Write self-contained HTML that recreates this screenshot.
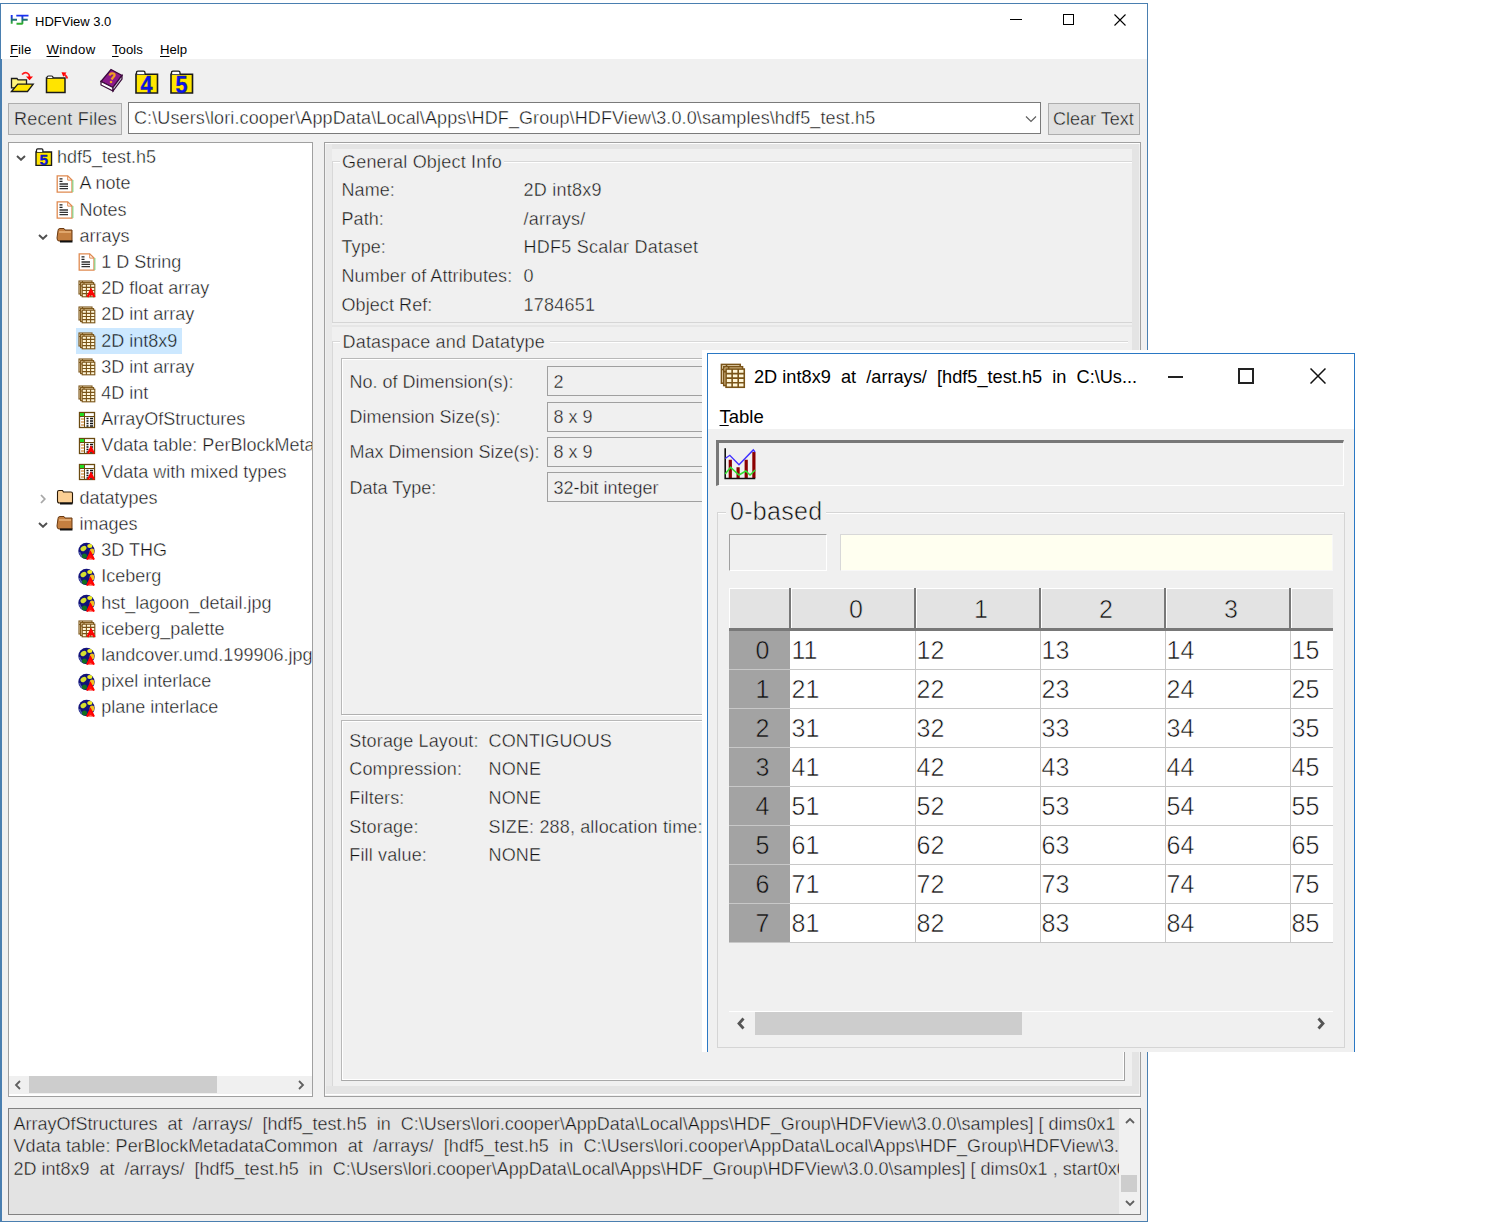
<!DOCTYPE html>
<html><head><meta charset="utf-8">
<style>
html,body{margin:0;padding:0;}
body{width:1500px;height:1225px;position:relative;overflow:hidden;background:#fff;font-family:"Liberation Sans",sans-serif;color:#000;}
.a{position:absolute;box-sizing:border-box;}
.t{position:absolute;white-space:nowrap;line-height:1;color:#111;-webkit-text-stroke:0.4px #f0f0f0;}
.tw{-webkit-text-stroke-color:#fff;}
.tg{-webkit-text-stroke-color:#e3e3e3;}
.tb{-webkit-text-stroke-color:#e1e1e1;}
.td{-webkit-text-stroke-color:#a3a3a3;}
.big{-webkit-text-stroke-width:0.55px;}
.s{position:absolute;white-space:nowrap;line-height:1;color:#000;}
u{text-decoration:underline;text-underline-offset:1.5px;text-decoration-thickness:1px;}
</style></head>
<body>

<div class="a" style="left:0px;top:3px;width:1148px;height:1219px;border:1px solid #4a7fb0;border-left-width:2px;background:#f0f0f0;"></div>
<div class="a" style="left:1px;top:4px;width:1146px;height:55px;background:#fff;"></div>
<svg class="a" style="left:10px;top:13px" width="20" height="13" viewBox="0 0 20 13"><defs><linearGradient id="lg" x1="0" y1="0" x2="0" y2="1"><stop offset="0.15" stop-color="#1a30f0"/><stop offset="0.55" stop-color="#1f7070"/><stop offset="0.95" stop-color="#30b030"/></linearGradient></defs><path d="M1.7 2v8.8M1.7 6.8H7M6.3 2.6H18.5M12.4 2.6V10.3Q12 10.8 11 10.8H6.5M12.4 6.8H17.7" stroke="url(#lg)" stroke-width="1.9" fill="none"/></svg>
<div class="s" style="left:35px;top:14.8px;font-size:13px;">HDFView 3.0</div>
<div class="a" style="left:1010px;top:19px;width:12px;height:1px;background:#000;"></div>
<div class="a" style="left:1063px;top:14px;width:11px;height:11px;border:1px solid #000;"></div>
<svg class="a" style="left:1114px;top:14px" width="12" height="12" viewBox="0 0 12 12"><path d="M0.5 0.5L11.5 11.5M11.5 0.5L0.5 11.5" stroke="#000" stroke-width="1.1"/></svg>
<div class="s" style="left:10px;top:42.6px;font-size:13.2px;"><u>F</u>ile</div>
<div class="s" style="left:46.5px;top:42.6px;font-size:13.2px;letter-spacing:0.35px;"><u>W</u>indow</div>
<div class="s" style="left:112px;top:42.6px;font-size:13.2px;"><u>T</u>ools</div>
<div class="s" style="left:160px;top:42.6px;font-size:13.2px;"><u>H</u>elp</div>
<svg class="a" style="left:10px;top:69px" width="25" height="25" viewBox="0 0 25 25"><path d="M1.5 9.5h5.5l1 1.3h8.5v8h-15z" fill="#fff37a" stroke="#1a1a1a" stroke-width="1.3"/><path d="M1.5 22.5L7.8 15.2H23.2L17.5 22.5z" fill="#ffe400" stroke="#1a1a1a" stroke-width="1.3"/><path d="M12 5.5q3.5-3.5 6.5 -0.5q1 1 1 3" fill="none" stroke="#ff1a1a" stroke-width="1.7"/><path d="M16 7.5h7l-3.5 3.8z" fill="#ff0000"/></svg>
<svg class="a" style="left:45px;top:70px" width="25" height="24" viewBox="0 0 25 24"><path d="M1.5 8h18.5v14.5h-18.5z" fill="#ffe400" stroke="#1a1a1a" stroke-width="1.5"/><path d="M2 8v-0.5q0-1.5 1.5-1.5h3q1.5 0 1.5 1.5v0.5" fill="#fff" stroke="#1a1a1a" stroke-width="1.2"/><path d="M16.5 2.2l5 0.3l-3.2 4.3z" fill="#ff0000"/><path d="M19.5 4.5q2.5 2 2.8 4" fill="none" stroke="#ff1a1a" stroke-width="1.8"/></svg>
<svg class="a" style="left:99px;top:68px" width="25" height="25" viewBox="0 0 25 25"><path d="M2 13.5L12 1.5L23 7.5L14 19.5z" fill="#8a1a8a" stroke="#3a0a3a" stroke-width="1.3"/><path d="M2 13.5L14 19.5L14 23L2 17z" fill="#fff" stroke="#3a0a3a" stroke-width="1.2"/><path d="M14 19.5L23 7.5L23 11L14 23z" fill="#c8c8d0" stroke="#3a0a3a" stroke-width="1.2"/><path d="M10.5 7.5q1-3 4-2q2.5 1-0.5 4l-1.5 2" fill="none" stroke="#f0a020" stroke-width="2.2"/><circle cx="12" cy="14" r="1.3" fill="#f0a020"/></svg>
<svg class="a" style="left:134.5px;top:69.5px" width="24" height="24" viewBox="0 0 24 24"><path d="M1 4.2h21.5v18.8h-21.5z" fill="#ffe600" stroke="#1a1a1a" stroke-width="1.6"/><path d="M1.5 4.2v-1.5q0-1.5 1.5-1.5h5.5q1.5 0 1.5 1.5v1.5" fill="#fff" stroke="#1a1a1a" stroke-width="1.3"/><text x="0" y="0" transform="translate(11.5 23) scale(0.9 1)" font-family="Liberation Sans" font-weight="bold" font-size="24" text-anchor="middle" fill="#0a14f0" stroke="#202060" stroke-width="0.4">4</text></svg>
<svg class="a" style="left:169.5px;top:69.5px" width="24" height="24" viewBox="0 0 24 24"><path d="M1 4.2h21.5v18.8h-21.5z" fill="#ffe600" stroke="#1a1a1a" stroke-width="1.6"/><path d="M1.5 4.2v-1.5q0-1.5 1.5-1.5h5.5q1.5 0 1.5 1.5v1.5" fill="#fff" stroke="#1a1a1a" stroke-width="1.3"/><text x="0" y="0" transform="translate(11.5 23) scale(0.9 1)" font-family="Liberation Sans" font-weight="bold" font-size="24" text-anchor="middle" fill="#0a14f0" stroke="#202060" stroke-width="0.4">5</text></svg>
<div class="a" style="left:8px;top:103px;width:114px;height:32px;border:1px solid #adadad;background:#e1e1e1;"></div>
<div class="t tb" style="left:14px;top:110.4px;font-size:18px;letter-spacing:0.25px;">Recent Files</div>
<div class="a" style="left:128px;top:102px;width:913px;height:32px;border:1px solid #7a7a7a;background:#fff;"></div>
<div class="t tw" style="left:134px;top:108.8px;font-size:18px;letter-spacing:0.11px;">C:\Users\lori.cooper\AppData\Local\Apps\HDF_Group\HDFView\3.0.0\samples\hdf5_test.h5</div>
<svg class="a" style="left:1025px;top:115px" width="12" height="8" viewBox="0 0 12 8"><path d="M1 1.5L6 6.5L11 1.5" stroke="#606060" stroke-width="1.2" fill="none"/></svg>
<div class="a" style="left:1048px;top:103px;width:92px;height:32px;border:1px solid #adadad;background:#e1e1e1;"></div>
<div class="t tb" style="left:1053px;top:110.2px;font-size:18px;">Clear Text</div>
<div class="a" style="left:8px;top:142px;width:305px;height:955px;border:1px solid #a0a0a0;background:#fff;"></div>
<div class="a" style="left:9px;top:143px;width:303px;height:953px;overflow:hidden;">
<svg class="a" style="left:25.5px;top:4.5px" width="18" height="18" viewBox="0 0 18 18"><path d="M1 4h15.5v13.5h-15.5z" fill="#ffe600" stroke="#1a1a1a" stroke-width="1.4"/><path d="M1.5 4v-2q0-1.2 1.2-1.2h4q1.2 0 1.2 1.2v2" fill="#fff" stroke="#1a1a1a" stroke-width="1.2"/><text x="8.8" y="17" font-family="Liberation Sans" font-weight="bold" font-size="15.5" text-anchor="middle" fill="#0a14f0" stroke="#202060" stroke-width="0.3">5</text></svg>
<svg class="a" style="left:7px;top:12px" width="10" height="6" viewBox="0 0 10 6"><path d="M1 1l4 3.8l4-3.8" stroke="#505050" stroke-width="1.9" fill="none"/></svg>
<div class="t tw" style="left:48px;top:5.2px;font-size:18px;">hdf5_test.h5</div>
<svg class="a" style="left:47px;top:31.5px" width="18" height="18" viewBox="0 0 18 18"><path d="M1.2 0.8h10.5l4.3 4.3v12h-14.8z" fill="#fff" stroke="#e08a50" stroke-width="1.3"/><path d="M16.8 5v12" stroke="#8fd48f" stroke-width="1.3"/><path d="M11.7 0.8v4.3h4.3" fill="none" stroke="#e08a50" stroke-width="1"/><path d="M3.5 3.8h3M3.5 6.3h3" stroke="#222" stroke-width="1.2"/><path d="M3.5 9h8.5M3.5 11.3h8.5M3.5 13.7h8.5" stroke="#333" stroke-width="1.3"/></svg>
<div class="t tw" style="left:70.5px;top:31.4px;font-size:18px;">A note</div>
<svg class="a" style="left:47px;top:57.5px" width="18" height="18" viewBox="0 0 18 18"><path d="M1.2 0.8h10.5l4.3 4.3v12h-14.8z" fill="#fff" stroke="#e08a50" stroke-width="1.3"/><path d="M16.8 5v12" stroke="#8fd48f" stroke-width="1.3"/><path d="M11.7 0.8v4.3h4.3" fill="none" stroke="#e08a50" stroke-width="1"/><path d="M3.5 3.8h3M3.5 6.3h3" stroke="#222" stroke-width="1.2"/><path d="M3.5 9h8.5M3.5 11.3h8.5M3.5 13.7h8.5" stroke="#333" stroke-width="1.3"/></svg>
<div class="t tw" style="left:70.5px;top:57.6px;font-size:18px;">Notes</div>
<svg class="a" style="left:47px;top:84px" width="18" height="16" viewBox="0 0 18 16"><path d="M2 3.5q0-2 2-2h4l1 1.5h7v11h-13q-2 0-2-3z" fill="#c47f40" stroke="#6a3a12" stroke-width="1"/><path d="M4 14.5h12.5" stroke="#111" stroke-width="2"/><path d="M3 5h12" stroke="#f2c08a" stroke-width="1.2"/></svg>
<svg class="a" style="left:29px;top:91px" width="10" height="6" viewBox="0 0 10 6"><path d="M1 1l4 3.8l4-3.8" stroke="#505050" stroke-width="1.9" fill="none"/></svg>
<div class="t tw" style="left:70.5px;top:83.8px;font-size:18px;">arrays</div>
<svg class="a" style="left:69px;top:109.5px" width="18" height="18" viewBox="0 0 18 18"><path d="M1.2 0.8h10.5l4.3 4.3v12h-14.8z" fill="#fff" stroke="#e08a50" stroke-width="1.3"/><path d="M16.8 5v12" stroke="#8fd48f" stroke-width="1.3"/><path d="M11.7 0.8v4.3h4.3" fill="none" stroke="#e08a50" stroke-width="1"/><path d="M3.5 3.8h3M3.5 6.3h3" stroke="#222" stroke-width="1.2"/><path d="M3.5 9h8.5M3.5 11.3h8.5M3.5 13.7h8.5" stroke="#333" stroke-width="1.3"/></svg>
<div class="t tw" style="left:92.3px;top:110.0px;font-size:18px;">1 D String</div>
<svg class="a" style="left:69px;top:136.5px" width="18" height="18" viewBox="0 0 18 18"><g stroke="#7a5418" stroke-width="1.1"><rect x="1" y="1" width="13" height="13" fill="#f8e8c8"/><path d="M1 4.5h13M4.5 1v13" fill="none"/><rect x="2.6" y="2.6" width="13" height="13" fill="#f4dcb0"/><path d="M2.6 6h13M6 2.6v13" fill="none"/><rect x="4.2" y="4.2" width="12.6" height="12.6" fill="#fff6d8"/><path d="M8.4 4.2v12.6M12.6 4.2v12.6M4.2 7.35h12.6M4.2 10.5h12.6M4.2 13.65h12.6" fill="none"/></g><path d="M9.5 17l3.5-7l3.5 7M10.8 14.5h4.4" fill="none" stroke="#ff0000" stroke-width="2.2"/></svg>
<div class="t tw" style="left:92.3px;top:136.2px;font-size:18px;">2D float array</div>
<svg class="a" style="left:69px;top:162.5px" width="18" height="18" viewBox="0 0 18 18"><g stroke="#7a5418" stroke-width="1.1"><rect x="1" y="1" width="13" height="13" fill="#f8e8c8"/><path d="M1 4.5h13M4.5 1v13" fill="none"/><rect x="2.6" y="2.6" width="13" height="13" fill="#f4dcb0"/><path d="M2.6 6h13M6 2.6v13" fill="none"/><rect x="4.2" y="4.2" width="12.6" height="12.6" fill="#fff6d8"/><path d="M8.4 4.2v12.6M12.6 4.2v12.6M4.2 7.35h12.6M4.2 10.5h12.6M4.2 13.65h12.6" fill="none"/></g></svg>
<div class="t tw" style="left:92.3px;top:162.4px;font-size:18px;">2D int array</div>
<div class="a" style="left:67px;top:185px;width:106px;height:26px;background:#cce8ff;"></div>
<svg class="a" style="left:69px;top:188.5px" width="18" height="18" viewBox="0 0 18 18"><g stroke="#7a5418" stroke-width="1.1"><rect x="1" y="1" width="13" height="13" fill="#f8e8c8"/><path d="M1 4.5h13M4.5 1v13" fill="none"/><rect x="2.6" y="2.6" width="13" height="13" fill="#f4dcb0"/><path d="M2.6 6h13M6 2.6v13" fill="none"/><rect x="4.2" y="4.2" width="12.6" height="12.6" fill="#fff6d8"/><path d="M8.4 4.2v12.6M12.6 4.2v12.6M4.2 7.35h12.6M4.2 10.5h12.6M4.2 13.65h12.6" fill="none"/></g></svg>
<div class="t" style="left:92.3px;top:188.6px;font-size:18px;-webkit-text-stroke-color:#cce8ff;">2D int8x9</div>
<svg class="a" style="left:69px;top:214.5px" width="18" height="18" viewBox="0 0 18 18"><g stroke="#7a5418" stroke-width="1.1"><rect x="1" y="1" width="13" height="13" fill="#f8e8c8"/><path d="M1 4.5h13M4.5 1v13" fill="none"/><rect x="2.6" y="2.6" width="13" height="13" fill="#f4dcb0"/><path d="M2.6 6h13M6 2.6v13" fill="none"/><rect x="4.2" y="4.2" width="12.6" height="12.6" fill="#fff6d8"/><path d="M8.4 4.2v12.6M12.6 4.2v12.6M4.2 7.35h12.6M4.2 10.5h12.6M4.2 13.65h12.6" fill="none"/></g></svg>
<div class="t tw" style="left:92.3px;top:214.8px;font-size:18px;">3D int array</div>
<svg class="a" style="left:69px;top:241.5px" width="18" height="18" viewBox="0 0 18 18"><g stroke="#7a5418" stroke-width="1.1"><rect x="1" y="1" width="13" height="13" fill="#f8e8c8"/><path d="M1 4.5h13M4.5 1v13" fill="none"/><rect x="2.6" y="2.6" width="13" height="13" fill="#f4dcb0"/><path d="M2.6 6h13M6 2.6v13" fill="none"/><rect x="4.2" y="4.2" width="12.6" height="12.6" fill="#fff6d8"/><path d="M8.4 4.2v12.6M12.6 4.2v12.6M4.2 7.35h12.6M4.2 10.5h12.6M4.2 13.65h12.6" fill="none"/></g></svg>
<div class="t tw" style="left:92.3px;top:241.0px;font-size:18px;">4D int</div>
<svg class="a" style="left:69px;top:267.5px" width="18" height="18" viewBox="0 0 18 18"><rect x="1.5" y="1.5" width="15" height="15" fill="#fff" stroke="#6a4a10" stroke-width="1.3"/><rect x="2" y="2" width="4.5" height="3.5" fill="#22dd22"/><path d="M6.5 2v14.5M1.5 5.5h15" stroke="#6a4a10" stroke-width="1"/><path d="M3 8h3M3 11h3M3 14h3" stroke="#d9a060" stroke-width="1.5"/><path d="M8.5 7.5h2M12 7.5h3M8.5 10h2M12 10h3M8.5 12.5h2M12 12.5h3M8.5 15h2M12 15h3" stroke="#111" stroke-width="1.4"/></svg>
<div class="t tw" style="left:92.3px;top:267.2px;font-size:18px;">ArrayOfStructures</div>
<svg class="a" style="left:69px;top:293.5px" width="18" height="18" viewBox="0 0 18 18"><rect x="1.5" y="1.5" width="15" height="15" fill="#fff" stroke="#6a4a10" stroke-width="1.3"/><rect x="2" y="2" width="4.5" height="3.5" fill="#22dd22"/><path d="M6.5 2v14.5M1.5 5.5h15" stroke="#6a4a10" stroke-width="1"/><path d="M3 8h3M3 11h3M3 14h3" stroke="#d9a060" stroke-width="1.5"/><path d="M8.5 7.5h2M12 7.5h3M8.5 10h2M12 10h3M8.5 12.5h2M12 12.5h3M8.5 15h2M12 15h3" stroke="#111" stroke-width="1.4"/><path d="M10 16.5l3-6 3 6M11.2 14h3.6" fill="none" stroke="#ff0000" stroke-width="2"/></svg>
<div class="t tw" style="left:92.3px;top:293.4px;font-size:18px;">Vdata table: PerBlockMetadataCommon</div>
<svg class="a" style="left:69px;top:319.5px" width="18" height="18" viewBox="0 0 18 18"><rect x="1.5" y="1.5" width="15" height="15" fill="#fff" stroke="#6a4a10" stroke-width="1.3"/><rect x="2" y="2" width="4.5" height="3.5" fill="#22dd22"/><path d="M6.5 2v14.5M1.5 5.5h15" stroke="#6a4a10" stroke-width="1"/><path d="M3 8h3M3 11h3M3 14h3" stroke="#d9a060" stroke-width="1.5"/><path d="M8.5 7.5h2M12 7.5h3M8.5 10h2M12 10h3M8.5 12.5h2M12 12.5h3M8.5 15h2M12 15h3" stroke="#111" stroke-width="1.4"/><path d="M10 16.5l3-6 3 6M11.2 14h3.6" fill="none" stroke="#ff0000" stroke-width="2"/></svg>
<div class="t tw" style="left:92.3px;top:319.6px;font-size:18px;">Vdata with mixed types</div>
<svg class="a" style="left:47px;top:346px" width="18" height="16" viewBox="0 0 18 16"><path d="M1.5 3q0-1.5 1.5-1.5h3.5l1 1.5h7.5q1.5 0 1.5 1.5v9.5h-13q-2 0-2-2z" fill="#fbcf94" stroke="#2a1a08" stroke-width="1.1"/><path d="M4 14.5h12.5" stroke="#111" stroke-width="2"/></svg>
<svg class="a" style="left:31px;top:351px" width="6" height="10" viewBox="0 0 6 10"><path d="M1 1l3.8 4l-3.8 4" stroke="#a8a8a8" stroke-width="1.8" fill="none"/></svg>
<div class="t tw" style="left:70.5px;top:345.8px;font-size:18px;">datatypes</div>
<svg class="a" style="left:47px;top:372px" width="18" height="16" viewBox="0 0 18 16"><path d="M2 3.5q0-2 2-2h4l1 1.5h7v11h-13q-2 0-2-3z" fill="#c47f40" stroke="#6a3a12" stroke-width="1"/><path d="M4 14.5h12.5" stroke="#111" stroke-width="2"/><path d="M3 5h12" stroke="#f2c08a" stroke-width="1.2"/></svg>
<svg class="a" style="left:29px;top:379px" width="10" height="6" viewBox="0 0 10 6"><path d="M1 1l4 3.8l4-3.8" stroke="#505050" stroke-width="1.9" fill="none"/></svg>
<div class="t tw" style="left:70.5px;top:372.0px;font-size:18px;">images</div>
<svg class="a" style="left:69px;top:398.5px" width="18" height="19" viewBox="0 0 18 19"><circle cx="8.5" cy="9" r="8.2" fill="#12127a"/><ellipse cx="5.5" cy="6.5" rx="3.2" ry="2.3" transform="rotate(-35 5.5 6.5)" fill="#d6e030"/><ellipse cx="11.8" cy="4" rx="2.6" ry="2" fill="#f0f020"/><path d="M1.5 10q0.5 3 3 5" stroke="#5060b0" stroke-width="1.5" fill="none"/><ellipse cx="6.5" cy="14" rx="2.5" ry="2.5" fill="#107020"/><ellipse cx="14" cy="9.5" rx="2.3" ry="3" fill="#f0c020"/><path d="M8.5 17.5l4-8l4 8z" fill="#ff1010"/><path d="M9 17.5l3.5-7.2l3.5 7.2" fill="none" stroke="#ff0000" stroke-width="1.8"/><path d="M11.5 16.5h2" stroke="#ff6040" stroke-width="1"/></svg>
<div class="t tw" style="left:92.3px;top:398.2px;font-size:18px;">3D THG</div>
<svg class="a" style="left:69px;top:424.5px" width="18" height="19" viewBox="0 0 18 19"><circle cx="8.5" cy="9" r="8.2" fill="#12127a"/><ellipse cx="5.5" cy="6.5" rx="3.2" ry="2.3" transform="rotate(-35 5.5 6.5)" fill="#d6e030"/><ellipse cx="11.8" cy="4" rx="2.6" ry="2" fill="#f0f020"/><path d="M1.5 10q0.5 3 3 5" stroke="#5060b0" stroke-width="1.5" fill="none"/><ellipse cx="6.5" cy="14" rx="2.5" ry="2.5" fill="#107020"/><ellipse cx="14" cy="9.5" rx="2.3" ry="3" fill="#f0c020"/><path d="M8.5 17.5l4-8l4 8z" fill="#ff1010"/><path d="M9 17.5l3.5-7.2l3.5 7.2" fill="none" stroke="#ff0000" stroke-width="1.8"/><path d="M11.5 16.5h2" stroke="#ff6040" stroke-width="1"/></svg>
<div class="t tw" style="left:92.3px;top:424.4px;font-size:18px;">Iceberg</div>
<svg class="a" style="left:69px;top:450.5px" width="18" height="19" viewBox="0 0 18 19"><circle cx="8.5" cy="9" r="8.2" fill="#12127a"/><ellipse cx="5.5" cy="6.5" rx="3.2" ry="2.3" transform="rotate(-35 5.5 6.5)" fill="#d6e030"/><ellipse cx="11.8" cy="4" rx="2.6" ry="2" fill="#f0f020"/><path d="M1.5 10q0.5 3 3 5" stroke="#5060b0" stroke-width="1.5" fill="none"/><ellipse cx="6.5" cy="14" rx="2.5" ry="2.5" fill="#107020"/><ellipse cx="14" cy="9.5" rx="2.3" ry="3" fill="#f0c020"/><path d="M8.5 17.5l4-8l4 8z" fill="#ff1010"/><path d="M9 17.5l3.5-7.2l3.5 7.2" fill="none" stroke="#ff0000" stroke-width="1.8"/><path d="M11.5 16.5h2" stroke="#ff6040" stroke-width="1"/></svg>
<div class="t tw" style="left:92.3px;top:450.6px;font-size:18px;">hst_lagoon_detail.jpg</div>
<svg class="a" style="left:69px;top:476.5px" width="18" height="18" viewBox="0 0 18 18"><g stroke="#7a5418" stroke-width="1.1"><rect x="1" y="1" width="13" height="13" fill="#f8e8c8"/><path d="M1 4.5h13M4.5 1v13" fill="none"/><rect x="2.6" y="2.6" width="13" height="13" fill="#f4dcb0"/><path d="M2.6 6h13M6 2.6v13" fill="none"/><rect x="4.2" y="4.2" width="12.6" height="12.6" fill="#fff6d8"/><path d="M8.4 4.2v12.6M12.6 4.2v12.6M4.2 7.35h12.6M4.2 10.5h12.6M4.2 13.65h12.6" fill="none"/></g><path d="M9.5 17l3.5-7l3.5 7M10.8 14.5h4.4" fill="none" stroke="#ff0000" stroke-width="2.2"/></svg>
<div class="t tw" style="left:92.3px;top:476.8px;font-size:18px;">iceberg_palette</div>
<svg class="a" style="left:69px;top:503.5px" width="18" height="19" viewBox="0 0 18 19"><circle cx="8.5" cy="9" r="8.2" fill="#12127a"/><ellipse cx="5.5" cy="6.5" rx="3.2" ry="2.3" transform="rotate(-35 5.5 6.5)" fill="#d6e030"/><ellipse cx="11.8" cy="4" rx="2.6" ry="2" fill="#f0f020"/><path d="M1.5 10q0.5 3 3 5" stroke="#5060b0" stroke-width="1.5" fill="none"/><ellipse cx="6.5" cy="14" rx="2.5" ry="2.5" fill="#107020"/><ellipse cx="14" cy="9.5" rx="2.3" ry="3" fill="#f0c020"/><path d="M8.5 17.5l4-8l4 8z" fill="#ff1010"/><path d="M9 17.5l3.5-7.2l3.5 7.2" fill="none" stroke="#ff0000" stroke-width="1.8"/><path d="M11.5 16.5h2" stroke="#ff6040" stroke-width="1"/></svg>
<div class="t tw" style="left:92.3px;top:503.0px;font-size:18px;">landcover.umd.199906.jpg</div>
<svg class="a" style="left:69px;top:529.5px" width="18" height="19" viewBox="0 0 18 19"><circle cx="8.5" cy="9" r="8.2" fill="#12127a"/><ellipse cx="5.5" cy="6.5" rx="3.2" ry="2.3" transform="rotate(-35 5.5 6.5)" fill="#d6e030"/><ellipse cx="11.8" cy="4" rx="2.6" ry="2" fill="#f0f020"/><path d="M1.5 10q0.5 3 3 5" stroke="#5060b0" stroke-width="1.5" fill="none"/><ellipse cx="6.5" cy="14" rx="2.5" ry="2.5" fill="#107020"/><ellipse cx="14" cy="9.5" rx="2.3" ry="3" fill="#f0c020"/><path d="M8.5 17.5l4-8l4 8z" fill="#ff1010"/><path d="M9 17.5l3.5-7.2l3.5 7.2" fill="none" stroke="#ff0000" stroke-width="1.8"/><path d="M11.5 16.5h2" stroke="#ff6040" stroke-width="1"/></svg>
<div class="t tw" style="left:92.3px;top:529.2px;font-size:18px;">pixel interlace</div>
<svg class="a" style="left:69px;top:555.5px" width="18" height="19" viewBox="0 0 18 19"><circle cx="8.5" cy="9" r="8.2" fill="#12127a"/><ellipse cx="5.5" cy="6.5" rx="3.2" ry="2.3" transform="rotate(-35 5.5 6.5)" fill="#d6e030"/><ellipse cx="11.8" cy="4" rx="2.6" ry="2" fill="#f0f020"/><path d="M1.5 10q0.5 3 3 5" stroke="#5060b0" stroke-width="1.5" fill="none"/><ellipse cx="6.5" cy="14" rx="2.5" ry="2.5" fill="#107020"/><ellipse cx="14" cy="9.5" rx="2.3" ry="3" fill="#f0c020"/><path d="M8.5 17.5l4-8l4 8z" fill="#ff1010"/><path d="M9 17.5l3.5-7.2l3.5 7.2" fill="none" stroke="#ff0000" stroke-width="1.8"/><path d="M11.5 16.5h2" stroke="#ff6040" stroke-width="1"/></svg>
<div class="t tw" style="left:92.3px;top:555.4px;font-size:18px;">plane interlace</div>
</div>
<div class="a" style="left:9px;top:1076px;width:303px;height:18px;background:#f0f0f0;"></div>
<div class="a" style="left:29px;top:1076px;width:188px;height:17px;background:#cdcdcd;"></div>
<svg class="a" style="left:14px;top:1080px" width="8" height="10" viewBox="0 0 8 10"><path d="M6 1L2 5l4 4" stroke="#606060" stroke-width="1.8" fill="none"/></svg>
<svg class="a" style="left:297px;top:1080px" width="8" height="10" viewBox="0 0 8 10"><path d="M2 1l4 4l-4 4" stroke="#606060" stroke-width="1.8" fill="none"/></svg>
<div class="a" style="left:324px;top:142px;width:817px;height:955px;border:1px solid #a0a0a0;background:#f0f0f0;"></div>
<div class="a" style="left:325px;top:143px;width:815px;height:1px;background:#fff;"></div>
<div class="a" style="left:326px;top:144px;width:813px;height:5px;background:#e4e4e4;"></div>
<div class="a" style="left:1132px;top:144px;width:7px;height:951px;background:#e4e4e4;"></div>
<div class="a" style="left:326px;top:144px;width:6px;height:951px;background:#e9e9e9;"></div>
<div class="a" style="left:326px;top:1086px;width:813px;height:8px;background:#e4e4e4;"></div>
<div class="a" style="left:325px;top:1094px;width:815px;height:1px;background:#fff;"></div>
<div class="a" style="left:332px;top:149px;width:800px;height:173px;background:#f0f0f0;"></div>
<div class="a" style="left:333px;top:161px;width:799px;height:1px;background:#d8d8d8;"></div>
<div class="a" style="left:333px;top:162px;width:799px;height:1px;background:#fff;"></div>
<div class="a" style="left:332px;top:161px;width:1px;height:162px;background:#d8d8d8;"></div>
<div class="a" style="left:332px;top:322px;width:800px;height:1px;background:#d5d5d5;"></div>
<div class="a" style="left:340px;top:150px;width:164px;height:22px;background:#f0f0f0;"></div>
<div class="t" style="left:342px;top:152.6px;font-size:18px;letter-spacing:0.2px;">General Object Info</div>
<div class="t" style="left:341.5px;top:181.0px;font-size:18px;letter-spacing:0.08px;">Name:</div>
<div class="t" style="left:523.5px;top:181.0px;font-size:18px;letter-spacing:0.25px;">2D int8x9</div>
<div class="t" style="left:341.5px;top:209.7px;font-size:18px;letter-spacing:0.08px;">Path:</div>
<div class="t" style="left:523.5px;top:209.7px;font-size:18px;letter-spacing:0.25px;">/arrays/</div>
<div class="t" style="left:341.5px;top:238.4px;font-size:18px;letter-spacing:0.08px;">Type:</div>
<div class="t" style="left:523.5px;top:238.4px;font-size:18px;letter-spacing:0.25px;">HDF5 Scalar Dataset</div>
<div class="t" style="left:341.5px;top:267.1px;font-size:18px;letter-spacing:0.08px;">Number of Attributes:</div>
<div class="t" style="left:523.5px;top:267.1px;font-size:18px;letter-spacing:0.25px;">0</div>
<div class="t" style="left:341.5px;top:295.8px;font-size:18px;letter-spacing:0.08px;">Object Ref:</div>
<div class="t" style="left:523.5px;top:295.8px;font-size:18px;letter-spacing:0.25px;">1784651</div>
<div class="a" style="left:332px;top:325px;width:800px;height:2px;background:#e6e6e6;"></div>
<div class="a" style="left:333px;top:341px;width:795px;height:1px;background:#d8d8d8;"></div>
<div class="a" style="left:333px;top:342px;width:795px;height:1px;background:#fff;"></div>
<div class="a" style="left:332px;top:341px;width:1px;height:745px;background:#d8d8d8;"></div>
<div class="a" style="left:340px;top:328px;width:210px;height:24px;background:#f0f0f0;"></div>
<div class="t" style="left:342.5px;top:333.0px;font-size:18px;letter-spacing:0.2px;">Dataspace and Datatype</div>
<div class="a" style="left:341px;top:358px;width:788px;height:357px;border:1px solid #b8b8b8;border-bottom-color:#b0b0b0;box-shadow:inset 1px 1px 0 #fff;"></div>
<div class="a" style="left:342px;top:715px;width:786px;height:1px;background:#fff;"></div>
<div class="a" style="left:547px;top:366px;width:590px;height:30px;border:1px solid #a0a0a0;background:#f0f0f0;"></div>
<div class="t" style="left:349.5px;top:373.0px;font-size:18px;">No. of Dimension(s):</div>
<div class="t" style="left:553.5px;top:373.0px;font-size:18px;">2</div>
<div class="a" style="left:547px;top:402px;width:590px;height:30px;border:1px solid #a0a0a0;background:#f0f0f0;"></div>
<div class="t" style="left:349.5px;top:408.2px;font-size:18px;">Dimension Size(s):</div>
<div class="t" style="left:553.5px;top:408.2px;font-size:18px;">8 x 9</div>
<div class="a" style="left:547px;top:437px;width:590px;height:30px;border:1px solid #a0a0a0;background:#f0f0f0;"></div>
<div class="t" style="left:349.5px;top:443.4px;font-size:18px;">Max Dimension Size(s):</div>
<div class="t" style="left:553.5px;top:443.4px;font-size:18px;">8 x 9</div>
<div class="a" style="left:547px;top:472px;width:590px;height:30px;border:1px solid #a0a0a0;background:#f0f0f0;"></div>
<div class="t" style="left:349.5px;top:478.6px;font-size:18px;">Data Type:</div>
<div class="t" style="left:553.5px;top:478.6px;font-size:18px;">32-bit integer</div>
<div class="a" style="left:341px;top:720px;width:784px;height:361px;border:1px solid #b8b8b8;border-right-color:#a0a0a0;border-bottom-color:#a8a8a8;box-shadow:inset 1px 1px 0 #fff,inset -1px -1px 0 #fff;"></div>
<div class="t" style="left:349.3px;top:731.7px;font-size:18px;letter-spacing:0.15px;">Storage Layout:</div>
<div class="t" style="left:488.5px;top:731.7px;font-size:18px;letter-spacing:0.15px;">CONTIGUOUS</div>
<div class="t" style="left:349.3px;top:760.3px;font-size:18px;letter-spacing:0.15px;">Compression:</div>
<div class="t" style="left:488.5px;top:760.3px;font-size:18px;letter-spacing:0.15px;">NONE</div>
<div class="t" style="left:349.3px;top:789.0px;font-size:18px;letter-spacing:0.15px;">Filters:</div>
<div class="t" style="left:488.5px;top:789.0px;font-size:18px;letter-spacing:0.15px;">NONE</div>
<div class="t" style="left:349.3px;top:817.6px;font-size:18px;letter-spacing:0.15px;">Storage:</div>
<div class="t" style="left:488.5px;top:817.6px;font-size:18px;letter-spacing:0.15px;">SIZE: 288, allocation time: </div>
<div class="t" style="left:349.3px;top:846.3px;font-size:18px;letter-spacing:0.15px;">Fill value:</div>
<div class="t" style="left:488.5px;top:846.3px;font-size:18px;letter-spacing:0.15px;">NONE</div>
<div class="a" style="left:8px;top:1108px;width:1133px;height:107px;border:1px solid #828282;background:#e3e3e3;"></div>
<div class="a" style="left:9px;top:1109px;width:1110px;height:105px;overflow:hidden;">
<div class="t tg" style="left:4.5px;top:5.8px;font-size:18px;letter-spacing:0.00px;">ArrayOfStructures&nbsp; at&nbsp; /arrays/&nbsp; [hdf5_test.h5&nbsp; in&nbsp; C:\Users\lori.cooper\AppData\Local\Apps\HDF_Group\HDFView\3.0.0\samples] [ dims0x1 , start0x0</div>
<div class="t tg" style="left:4.5px;top:28.4px;font-size:18px;letter-spacing:0.08px;">Vdata table: PerBlockMetadataCommon&nbsp; at&nbsp; /arrays/&nbsp; [hdf5_test.h5&nbsp; in&nbsp; C:\Users\lori.cooper\AppData\Local\Apps\HDF_Group\HDFView\3.0.0\samples] [</div>
<div class="t tg" style="left:4.5px;top:51.0px;font-size:18px;letter-spacing:0.00px;">2D int8x9&nbsp; at&nbsp; /arrays/&nbsp; [hdf5_test.h5&nbsp; in&nbsp; C:\Users\lori.cooper\AppData\Local\Apps\HDF_Group\HDFView\3.0.0\samples] [ dims0x1 , start0x0 ]</div>
</div>
<div class="a" style="left:1119px;top:1109px;width:21px;height:105px;background:#f0f0f0;"></div>
<div class="a" style="left:1121px;top:1175px;width:16px;height:17px;background:#cdcdcd;"></div>
<svg class="a" style="left:1125px;top:1117px" width="10" height="8" viewBox="0 0 10 8"><path d="M1 6l4-4l4 4" stroke="#606060" stroke-width="1.8" fill="none"/></svg>
<svg class="a" style="left:1125px;top:1199px" width="10" height="8" viewBox="0 0 10 8"><path d="M1 2l4 4l4-4" stroke="#606060" stroke-width="1.8" fill="none"/></svg>
<div class="a" style="left:702px;top:350px;width:657px;height:702px;background:#fff;"></div>
<div class="a" style="left:707px;top:353px;width:648px;height:699px;border:1px solid #2a78c4;border-bottom:none;background:#f0f0f0;"></div>
<div class="a" style="left:708px;top:354px;width:646px;height:75px;background:#fff;"></div>
<svg class="a" style="left:720px;top:363px" width="26" height="26" viewBox="0 0 18 18"><g stroke="#7a5418" stroke-width="1.1"><rect x="1" y="1" width="13" height="13" fill="#f8e8c8"/><path d="M1 4.5h13M4.5 1v13" fill="none"/><rect x="2.6" y="2.6" width="13" height="13" fill="#f4dcb0"/><path d="M2.6 6h13M6 2.6v13" fill="none"/><rect x="4.2" y="4.2" width="12.6" height="12.6" fill="#fff6d8"/><path d="M8.4 4.2v12.6M12.6 4.2v12.6M4.2 7.35h12.6M4.2 10.5h12.6M4.2 13.65h12.6" fill="none"/></g></svg>
<div class="s" style="left:754px;top:368.2px;font-size:18.2px;">2D int8x9&nbsp; at&nbsp; /arrays/&nbsp; [hdf5_test.h5&nbsp; in&nbsp; C:\Us...</div>
<div class="a" style="left:1168px;top:376px;width:15px;height:2px;background:#222;"></div>
<div class="a" style="left:1238px;top:368px;width:16px;height:16px;border:2px solid #222;"></div>
<svg class="a" style="left:1310px;top:368px" width="16" height="16" viewBox="0 0 16 16"><path d="M0.5 0.5L15.5 15.5M15.5 0.5L0.5 15.5" stroke="#111" stroke-width="1.5"/></svg>
<div class="s" style="left:719.5px;top:407.9px;font-size:18.5px;"><u>T</u>able</div>
<div class="a" style="left:716px;top:440px;width:628px;height:46px;border:3px solid #787878;border-right:1px solid #fff;border-bottom:1px solid #fff;"></div>
<svg class="a" style="left:724px;top:447px" width="33" height="33" viewBox="0 0 33 33"><path d="M6.3 31V12.7M14.1 31V20.3M22.2 31V12.7M29.9 31V5" stroke="#8b0000" stroke-width="3.2"/><path d="M1.2 1.2V31.5H31.3" stroke="#111" stroke-width="1.6" fill="none"/><path d="M1.2 11.5L5.8 8.3L15 17.8L29.3 2.9L31 5" stroke="#4030ff" stroke-width="1.4" fill="none"/><path d="M1.2 27L6.6 20.4L15 28L21.8 24L26 28L31.2 23" stroke="#30e030" stroke-width="1.5" fill="none"/></svg>
<div class="a" style="left:717px;top:512px;width:628px;height:536px;border:1px solid #d5d5d5;"></div>
<div class="a" style="left:718px;top:513px;width:626px;height:1px;background:#fff;"></div>
<div class="a" style="left:726px;top:496px;width:100px;height:30px;background:#f0f0f0;"></div>
<div class="t big" style="left:730px;top:498.6px;font-size:25px;letter-spacing:0.3px;">0-based</div>
<div class="a" style="left:729px;top:534px;width:98px;height:37px;border:1px solid #a0a0a0;border-right-color:#fff;border-bottom-color:#fff;"></div>
<div class="a" style="left:840px;top:534px;width:493px;height:37px;border:1px solid #d8d8d8;border-right-color:#f8f8f8;border-bottom-color:#f8f8f8;background:#fffff0;"></div>
<div class="a" style="left:729px;top:588px;width:604px;height:356px;overflow:hidden;">
<div class="a" style="left:0px;top:0px;width:604px;height:355px;background:#fff;"></div>
<div class="a" style="left:0px;top:0px;width:604px;height:41px;background:#e3e3e3;border-top:1px solid #fff;border-left:1px solid #fff;"></div>
<div class="a" style="left:0px;top:40px;width:604px;height:3px;background:#787878;"></div>
<div class="a" style="left:60px;top:0px;width:2px;height:40px;background:#787878;"></div>
<div class="a" style="left:62px;top:1px;width:1px;height:39px;background:#fff;"></div>
<div class="a" style="left:185px;top:0px;width:2px;height:40px;background:#787878;"></div>
<div class="a" style="left:187px;top:1px;width:1px;height:39px;background:#fff;"></div>
<div class="a" style="left:310px;top:0px;width:2px;height:40px;background:#787878;"></div>
<div class="a" style="left:312px;top:1px;width:1px;height:39px;background:#fff;"></div>
<div class="a" style="left:435px;top:0px;width:2px;height:40px;background:#787878;"></div>
<div class="a" style="left:437px;top:1px;width:1px;height:39px;background:#fff;"></div>
<div class="a" style="left:560px;top:0px;width:2px;height:40px;background:#787878;"></div>
<div class="a" style="left:562px;top:1px;width:1px;height:39px;background:#fff;"></div>
<div class="a" style="left:0px;top:43px;width:61px;height:312px;background:#a3a3a3;"></div>
<div class="a" style="left:61px;top:81px;width:543px;height:1px;background:#c8c8c8;"></div>
<div class="a" style="left:0px;top:81px;width:61px;height:1px;background:#c8c8c8;"></div>
<div class="t td big" style="left:26.5px;top:49.7px;font-size:25px;">0</div>
<div class="a" style="left:186px;top:43px;width:1px;height:39px;background:#c8c8c8;"></div>
<div class="t tw big" style="left:62.5px;top:49.7px;font-size:25px;">11</div>
<div class="a" style="left:311px;top:43px;width:1px;height:39px;background:#c8c8c8;"></div>
<div class="t tw big" style="left:187.5px;top:49.7px;font-size:25px;">12</div>
<div class="a" style="left:436px;top:43px;width:1px;height:39px;background:#c8c8c8;"></div>
<div class="t tw big" style="left:312.5px;top:49.7px;font-size:25px;">13</div>
<div class="a" style="left:561px;top:43px;width:1px;height:39px;background:#c8c8c8;"></div>
<div class="t tw big" style="left:437.5px;top:49.7px;font-size:25px;">14</div>
<div class="a" style="left:686px;top:43px;width:1px;height:39px;background:#c8c8c8;"></div>
<div class="t tw big" style="left:562.5px;top:49.7px;font-size:25px;">15</div>
<div class="a" style="left:61px;top:120px;width:543px;height:1px;background:#c8c8c8;"></div>
<div class="a" style="left:0px;top:120px;width:61px;height:1px;background:#c8c8c8;"></div>
<div class="t td big" style="left:26.5px;top:88.7px;font-size:25px;">1</div>
<div class="a" style="left:186px;top:82px;width:1px;height:39px;background:#c8c8c8;"></div>
<div class="t tw big" style="left:62.5px;top:88.7px;font-size:25px;">21</div>
<div class="a" style="left:311px;top:82px;width:1px;height:39px;background:#c8c8c8;"></div>
<div class="t tw big" style="left:187.5px;top:88.7px;font-size:25px;">22</div>
<div class="a" style="left:436px;top:82px;width:1px;height:39px;background:#c8c8c8;"></div>
<div class="t tw big" style="left:312.5px;top:88.7px;font-size:25px;">23</div>
<div class="a" style="left:561px;top:82px;width:1px;height:39px;background:#c8c8c8;"></div>
<div class="t tw big" style="left:437.5px;top:88.7px;font-size:25px;">24</div>
<div class="a" style="left:686px;top:82px;width:1px;height:39px;background:#c8c8c8;"></div>
<div class="t tw big" style="left:562.5px;top:88.7px;font-size:25px;">25</div>
<div class="a" style="left:61px;top:159px;width:543px;height:1px;background:#c8c8c8;"></div>
<div class="a" style="left:0px;top:159px;width:61px;height:1px;background:#c8c8c8;"></div>
<div class="t td big" style="left:26.5px;top:127.7px;font-size:25px;">2</div>
<div class="a" style="left:186px;top:121px;width:1px;height:39px;background:#c8c8c8;"></div>
<div class="t tw big" style="left:62.5px;top:127.7px;font-size:25px;">31</div>
<div class="a" style="left:311px;top:121px;width:1px;height:39px;background:#c8c8c8;"></div>
<div class="t tw big" style="left:187.5px;top:127.7px;font-size:25px;">32</div>
<div class="a" style="left:436px;top:121px;width:1px;height:39px;background:#c8c8c8;"></div>
<div class="t tw big" style="left:312.5px;top:127.7px;font-size:25px;">33</div>
<div class="a" style="left:561px;top:121px;width:1px;height:39px;background:#c8c8c8;"></div>
<div class="t tw big" style="left:437.5px;top:127.7px;font-size:25px;">34</div>
<div class="a" style="left:686px;top:121px;width:1px;height:39px;background:#c8c8c8;"></div>
<div class="t tw big" style="left:562.5px;top:127.7px;font-size:25px;">35</div>
<div class="a" style="left:61px;top:198px;width:543px;height:1px;background:#c8c8c8;"></div>
<div class="a" style="left:0px;top:198px;width:61px;height:1px;background:#c8c8c8;"></div>
<div class="t td big" style="left:26.5px;top:166.7px;font-size:25px;">3</div>
<div class="a" style="left:186px;top:160px;width:1px;height:39px;background:#c8c8c8;"></div>
<div class="t tw big" style="left:62.5px;top:166.7px;font-size:25px;">41</div>
<div class="a" style="left:311px;top:160px;width:1px;height:39px;background:#c8c8c8;"></div>
<div class="t tw big" style="left:187.5px;top:166.7px;font-size:25px;">42</div>
<div class="a" style="left:436px;top:160px;width:1px;height:39px;background:#c8c8c8;"></div>
<div class="t tw big" style="left:312.5px;top:166.7px;font-size:25px;">43</div>
<div class="a" style="left:561px;top:160px;width:1px;height:39px;background:#c8c8c8;"></div>
<div class="t tw big" style="left:437.5px;top:166.7px;font-size:25px;">44</div>
<div class="a" style="left:686px;top:160px;width:1px;height:39px;background:#c8c8c8;"></div>
<div class="t tw big" style="left:562.5px;top:166.7px;font-size:25px;">45</div>
<div class="a" style="left:61px;top:237px;width:543px;height:1px;background:#c8c8c8;"></div>
<div class="a" style="left:0px;top:237px;width:61px;height:1px;background:#c8c8c8;"></div>
<div class="t td big" style="left:26.5px;top:205.7px;font-size:25px;">4</div>
<div class="a" style="left:186px;top:199px;width:1px;height:39px;background:#c8c8c8;"></div>
<div class="t tw big" style="left:62.5px;top:205.7px;font-size:25px;">51</div>
<div class="a" style="left:311px;top:199px;width:1px;height:39px;background:#c8c8c8;"></div>
<div class="t tw big" style="left:187.5px;top:205.7px;font-size:25px;">52</div>
<div class="a" style="left:436px;top:199px;width:1px;height:39px;background:#c8c8c8;"></div>
<div class="t tw big" style="left:312.5px;top:205.7px;font-size:25px;">53</div>
<div class="a" style="left:561px;top:199px;width:1px;height:39px;background:#c8c8c8;"></div>
<div class="t tw big" style="left:437.5px;top:205.7px;font-size:25px;">54</div>
<div class="a" style="left:686px;top:199px;width:1px;height:39px;background:#c8c8c8;"></div>
<div class="t tw big" style="left:562.5px;top:205.7px;font-size:25px;">55</div>
<div class="a" style="left:61px;top:276px;width:543px;height:1px;background:#c8c8c8;"></div>
<div class="a" style="left:0px;top:276px;width:61px;height:1px;background:#c8c8c8;"></div>
<div class="t td big" style="left:26.5px;top:244.7px;font-size:25px;">5</div>
<div class="a" style="left:186px;top:238px;width:1px;height:39px;background:#c8c8c8;"></div>
<div class="t tw big" style="left:62.5px;top:244.7px;font-size:25px;">61</div>
<div class="a" style="left:311px;top:238px;width:1px;height:39px;background:#c8c8c8;"></div>
<div class="t tw big" style="left:187.5px;top:244.7px;font-size:25px;">62</div>
<div class="a" style="left:436px;top:238px;width:1px;height:39px;background:#c8c8c8;"></div>
<div class="t tw big" style="left:312.5px;top:244.7px;font-size:25px;">63</div>
<div class="a" style="left:561px;top:238px;width:1px;height:39px;background:#c8c8c8;"></div>
<div class="t tw big" style="left:437.5px;top:244.7px;font-size:25px;">64</div>
<div class="a" style="left:686px;top:238px;width:1px;height:39px;background:#c8c8c8;"></div>
<div class="t tw big" style="left:562.5px;top:244.7px;font-size:25px;">65</div>
<div class="a" style="left:61px;top:315px;width:543px;height:1px;background:#c8c8c8;"></div>
<div class="a" style="left:0px;top:315px;width:61px;height:1px;background:#c8c8c8;"></div>
<div class="t td big" style="left:26.5px;top:283.7px;font-size:25px;">6</div>
<div class="a" style="left:186px;top:277px;width:1px;height:39px;background:#c8c8c8;"></div>
<div class="t tw big" style="left:62.5px;top:283.7px;font-size:25px;">71</div>
<div class="a" style="left:311px;top:277px;width:1px;height:39px;background:#c8c8c8;"></div>
<div class="t tw big" style="left:187.5px;top:283.7px;font-size:25px;">72</div>
<div class="a" style="left:436px;top:277px;width:1px;height:39px;background:#c8c8c8;"></div>
<div class="t tw big" style="left:312.5px;top:283.7px;font-size:25px;">73</div>
<div class="a" style="left:561px;top:277px;width:1px;height:39px;background:#c8c8c8;"></div>
<div class="t tw big" style="left:437.5px;top:283.7px;font-size:25px;">74</div>
<div class="a" style="left:686px;top:277px;width:1px;height:39px;background:#c8c8c8;"></div>
<div class="t tw big" style="left:562.5px;top:283.7px;font-size:25px;">75</div>
<div class="a" style="left:61px;top:354px;width:543px;height:1px;background:#c8c8c8;"></div>
<div class="a" style="left:0px;top:354px;width:61px;height:1px;background:#c8c8c8;"></div>
<div class="t td big" style="left:26.5px;top:322.7px;font-size:25px;">7</div>
<div class="a" style="left:186px;top:316px;width:1px;height:39px;background:#c8c8c8;"></div>
<div class="t tw big" style="left:62.5px;top:322.7px;font-size:25px;">81</div>
<div class="a" style="left:311px;top:316px;width:1px;height:39px;background:#c8c8c8;"></div>
<div class="t tw big" style="left:187.5px;top:322.7px;font-size:25px;">82</div>
<div class="a" style="left:436px;top:316px;width:1px;height:39px;background:#c8c8c8;"></div>
<div class="t tw big" style="left:312.5px;top:322.7px;font-size:25px;">83</div>
<div class="a" style="left:561px;top:316px;width:1px;height:39px;background:#c8c8c8;"></div>
<div class="t tw big" style="left:437.5px;top:322.7px;font-size:25px;">84</div>
<div class="a" style="left:686px;top:316px;width:1px;height:39px;background:#c8c8c8;"></div>
<div class="t tw big" style="left:562.5px;top:322.7px;font-size:25px;">85</div>
<div class="t tg big" style="left:120.0px;top:9.1px;font-size:25px;">0</div>
<div class="t tg big" style="left:245.0px;top:9.1px;font-size:25px;">1</div>
<div class="t tg big" style="left:370.0px;top:9.1px;font-size:25px;">2</div>
<div class="t tg big" style="left:495.0px;top:9.1px;font-size:25px;">3</div>
<div class="t tg big" style="left:620.0px;top:9.1px;font-size:25px;">4</div>
</div>
<div class="a" style="left:729px;top:1011px;width:604px;height:1px;background:#fff;"></div>
<div class="a" style="left:755px;top:1012px;width:267px;height:23px;background:#cdcdcd;"></div>
<svg class="a" style="left:736px;top:1017px" width="10" height="13" viewBox="0 0 10 13"><path d="M7.5 1.5L3 6.5l4.5 5" stroke="#555" stroke-width="2.8" fill="none"/></svg>
<svg class="a" style="left:1316px;top:1017px" width="10" height="13" viewBox="0 0 10 13"><path d="M2.5 1.5l4.5 5l-4.5 5" stroke="#555" stroke-width="2.8" fill="none"/></svg>
</body></html>
